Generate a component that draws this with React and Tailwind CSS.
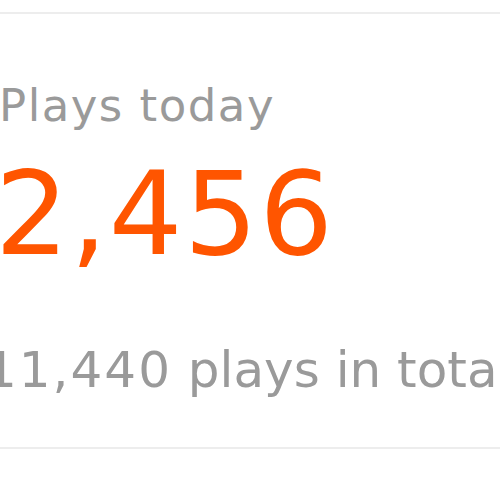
export default function App() {
  return (
    <div className="w-[500px] h-[500px] bg-white overflow-hidden relative" style={{ fontFamily: '"DejaVu Sans", sans-serif' }}>
      <div className="mt-[12px] ml-[-40px] w-[600px] h-[437px] border-y-2 border-[#ededed] bg-white">
        <div className="pl-[37px] pt-[69px] flex flex-col">
          <div className="ml-[2px] text-[45px] leading-none tracking-[1.5px] text-[#9a9a9a] whitespace-nowrap">Plays today</div>
          <div className="mt-[28px] ml-[-2px] text-[116px] leading-none tracking-[1.5px] text-[#ff5500] whitespace-nowrap">2,456</div>
          <div className="mt-[73px] ml-[-12px] text-[50px] leading-none text-[#9a9a9a] whitespace-nowrap">
            <span className="tracking-[2px]">11,440</span> plays in total
          </div>
        </div>
      </div>
    </div>
  );
}
